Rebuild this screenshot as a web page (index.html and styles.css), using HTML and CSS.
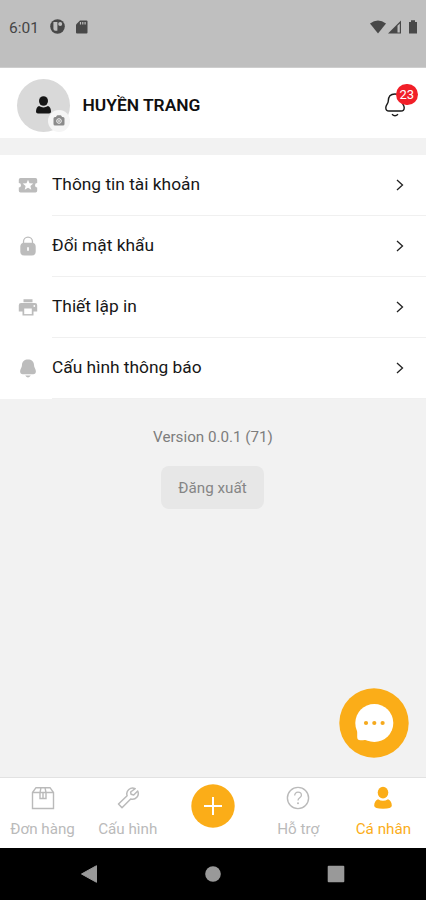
FILE: index.html
```html
<!DOCTYPE html>
<html lang="vi">
<head>
<meta charset="utf-8">
<title>Cá nhân</title>
<link rel="stylesheet" href="styles.css">
</head>
<body>
<div class="screen">
  <div class="status">
    <span class="time">6:01</span>
    <svg class="status-app" width="15" height="15" viewBox="0 0 15 15"><circle cx="7.5" cy="7.5" r="7.3" fill="#484848"/><path d="M3.400 3h4v8.800h-2a2 2 0 0 1-2-2z" fill="#bfbfbf"/><circle cx="10.200" cy="4.900" r="2" fill="#bfbfbf"/></svg>
    <svg class="status-sd" width="12" height="14" viewBox="0 0 12 14"><path d="M4 .5h6.500Q11.500.5 11.500 1.500v11q0 1-1 1h-9.500q-1 0-1-1V4.500z" fill="#484848"/><path d="M4.500 2v2.500M6.800 2v2.500M9.100 2v2.500" stroke="#bfbfbf" stroke-width="1.200"/></svg>
    <svg class="status-system" width="48" height="15" viewBox="0 0 48 15"><path d="M0 3.500Q8-2.500 16 3.500L8 13.500z" fill="#484848"/><path d="M18 13.500L31 .5v13z" fill="#484848"/><path d="M27.500 5.700l2.300-2.300v9.200h-2.300z" fill="#bfbfbf"/><path d="M39 2h2V.300h4V2h2v11.500h-8z" fill="#484848"/></svg>
  </div>
  <header class="profile">
    <div class="avatar">
      <svg width="16" height="20" viewBox="0 0 16 20"><ellipse cx="7.500" cy="6" rx="4.500" ry="4.800" fill="#151515"/><path d="M3 11Q7.500 13.800 12 11Q15 12.300 15 16.800Q15 18.500 13 18.500h-11Q0 18.500 0 16.800Q0 12.300 3 11z" fill="#151515"/></svg>
      <span class="camera"><svg width="12" height="11" viewBox="0 0 12 11"><path d="M3.500 1Q4 .300 4.500.300h3Q8 .300 8.500 1L9 2h1q1.500 0 1.500 1.500v5.500q0 1.500-1.500 1.500h-8Q.5 10.500.5 9v-5.500Q.5 2 2 2h1z" fill="#8b8b8b"/><circle cx="6" cy="6" r="2.300" fill="none" stroke="#f5f5f5"/><path d="M6 4.900v2.200M4.900 6h2.200" stroke="#f5f5f5" stroke-width=".7"/></svg></span>
    </div>
    <h1 class="name">HUYỀN TRANG</h1>
    <div class="bell">
      <svg width="22" height="26" viewBox="0 0 22 26"><path d="M4.200 9.500C4.200 4.500 6.500 2 11 2s6.800 2.500 6.800 7.500c0 2 2.400 3.500 2.400 6.200 0 2.200-1.200 3.300-3.200 3.300H5c-2 0-3.200-1.100-3.200-3.300 0-2.700 2.400-4.200 2.400-6.200z" fill="none" stroke="#181818" stroke-width="1.400"/><path d="M8 22.200q3 3 6 0" fill="none" stroke="#181818" stroke-width="1.400"/></svg>
      <span class="badge">23</span>
    </div>
  </header>
  <main class="content">
    <ul class="menu">
      <li class="row"><svg class="row-icon" width="20" height="22" viewBox="0 0 20 22"><path d="M2.500 4h15q1.700 0 1.700 1.700V9a2.200 2.200 0 0 0 0 4.400v3.300q0 1.700-1.700 1.700h-15Q.8 18.400.8 16.700v-3.300a2.200 2.200 0 0 0 0-4.400V5.700Q.8 4 2.500 4z" fill="#bcbcbc"/><path d="M10 5.800l1.500 3.500 3.800.3-2.900 2.500.9 3.700-3.300-2-3.300 2 .9-3.700-2.900-2.500 3.800-.3z" fill="#fff"/></svg><span class="label">Thông tin tài khoản</span><svg class="chevron" width="8" height="12" viewBox="0 0 8 12"><path d="M1 1l5.500 5L1 11"/></svg></li>
      <li class="row"><svg class="row-icon" width="20" height="22" viewBox="0 0 20 22"><path d="M5.500 9V6.700a4.500 4.500 0 0 1 9 0V9" fill="none" stroke="#bcbcbc" stroke-width="1.300"/><rect x="2.300" y="7.700" width="15.400" height="12.800" rx="4" fill="#bcbcbc"/><path d="M10 12.200v3.500" stroke="#fff" stroke-width="1.700"/></svg><span class="label">Đổi mật khẩu</span><svg class="chevron" width="8" height="12" viewBox="0 0 8 12"><path d="M1 1l5.500 5L1 11"/></svg></li>
      <li class="row"><svg class="row-icon" width="20" height="22" viewBox="0 0 20 22"><path d="M5.500 3.200h9v3h-9zM3 7h14q2.200 0 2.200 2.200v6.200h-3.700v4.200h-11v-4.200H.8V9.200Q.8 7 3 7z" fill="#bcbcbc"/><path d="M6.200 12.500h7.600v5.600H6.200z" fill="#fff"/><circle cx="16.300" cy="10" r=".9" fill="#fff"/></svg><span class="label">Thiết lập in</span><svg class="chevron" width="8" height="12" viewBox="0 0 8 12"><path d="M1 1l5.500 5L1 11"/></svg></li>
      <li class="row"><svg class="row-icon" width="20" height="22" viewBox="0 0 20 22"><path d="M4 8c0-3.500 2.500-5.500 6-5.500s6 2 6 5.500c0 2.500 1.900 4 1.900 6.300 0 2-1 3-2.700 3H4.800c-1.700 0-2.700-1-2.700-3C2.100 12 4 10.500 4 8z" fill="#bcbcbc"/><path d="M7.200 18.500h5.600q-2.800 4-5.600 0z" fill="#bcbcbc"/></svg><span class="label">Cấu hình thông báo</span><svg class="chevron" width="8" height="12" viewBox="0 0 8 12"><path d="M1 1l5.500 5L1 11"/></svg></li>
    </ul>
    <p class="version">Version 0.0.1 (71)</p>
    <button class="logout">Đăng xuất</button>
    <button class="chat" aria-label="Chat"><svg width="70" height="70" viewBox="0 0 70 70"><circle cx="35" cy="35" r="34.700" fill="#fbad18"/><circle cx="35.300" cy="35" r="19" fill="#fff"/><path d="M18.200 40v9q0 3.200 3.200 3.200H24q3-.5 7 .8z" fill="#fff"/><g fill="#f5a91d"><circle cx="27" cy="35" r="2.100"/><circle cx="35.300" cy="35" r="2.100"/><circle cx="43.600" cy="35" r="2.100"/></g></svg></button>
  </main>
  <nav class="tabs">
    <a class="tab"><svg width="24" height="24" viewBox="0 0 24 24"><path d="M1.500 6.500L5 1.700h14l3.500 4.800v16h-21zM1.500 6.500h21M10 1.700L9 6.500v6h6v-6l-1-4.800M12 6.500v6" fill="none" stroke="currentColor" stroke-width="1.400"/></svg><span class="tab-label">Đơn hàng</span></a>
    <a class="tab"><svg width="24" height="24" viewBox="0 0 24 24"><path d="M19.200 2.700a5.800 5.800 0 0 0-8.100 7L2.500 18l3.500 3.700 8.700-8.700a5.800 5.800 0 0 0 7-8l-4 4-2.600-.7-.5-2.300z" fill="none" stroke="currentColor" stroke-width="1.500" stroke-linejoin="round"/></svg><span class="tab-label">Cấu hình</span></a>
    <a class="tab add"><svg width="44" height="44" viewBox="0 0 44 44"><circle cx="22" cy="22" r="21.700" fill="#fbad18"/><path d="M22 13v18M13 22h18" stroke="#fff" stroke-width="2"/></svg></a>
    <a class="tab"><svg width="24" height="24" viewBox="0 0 24 24"><circle cx="12" cy="12" r="10.600" fill="none" stroke="currentColor" stroke-width="1.400"/><path d="M8.700 9.600c0-2 1.300-3.400 3.300-3.400s3.400 1.300 3.400 3c0 2.600-3.400 2.600-3.400 5.300" fill="none" stroke="currentColor" stroke-width="1.300"/><circle cx="12" cy="17.300" r="1" fill="currentColor"/></svg><span class="tab-label">Hỗ trợ</span></a>
    <a class="tab active"><svg width="24" height="24" viewBox="0 0 24 24"><ellipse cx="12" cy="6.600" rx="5.300" ry="5.800" fill="currentColor"/><path d="M7 13.300q5 3 10 0 3.800 1.800 3.800 6.500 0 3-8.800 3t-8.800-3q0-4.700 3.800-6.500z" fill="currentColor"/></svg><span class="tab-label">Cá nhân</span></a>
  </nav>
  <div class="system-nav">
    <svg width="18" height="20" viewBox="0 0 18 20"><path d="M1.500 10L16.500 1.700v16.600z" fill="#999" stroke="#999" stroke-linejoin="round"/></svg>
    <svg width="16" height="16" viewBox="0 0 16 16"><circle cx="8" cy="8" r="7.800" fill="#999"/></svg>
    <svg width="18" height="18" viewBox="0 0 18 18"><rect x=".7" y=".7" width="16.600" height="16.600" rx="1" fill="#999"/></svg>
  </div>
</div>
</body>
</html>
```
FILE: styles.css
```css
* { box-sizing: border-box; }
body { margin: 0; font-family: Roboto, "Noto Sans", sans-serif; background: #f2f2f2; }
svg { display: block; flex: none; }
button { border: 0; padding: 0; font: inherit; }
.screen { width: 426px; height: 900px; display: flex; flex-direction: column; overflow: hidden; }
.status { height: 68px; flex: none; display: flex; align-items: flex-start; padding: 19px 8px 0 9px; background: #bfbfbf; border-bottom: 1px solid #cecece; }
.time { width: 41px; font-size: 15.500px; line-height: 18px; color: #454545; }
.status-sd { margin-left: 11px; margin-top: 1px; }
.status-system { margin-left: auto; margin-top: 1px; }
.profile { height: 70px; flex: none; display: flex; align-items: center; padding: 4px 18px 0 17px; background: #fff; }
.avatar { position: relative; width: 53px; height: 53px; border-radius: 50%; background: #d9d9d9; display: flex; align-items: center; justify-content: center; }
.camera { position: absolute; right: 0; bottom: 0; width: 22px; height: 22px; border-radius: 50%; background: #f5f5f5; display: flex; align-items: center; justify-content: center; }
.name { margin: -1px 0 0 12.500px; font-size: 17.400px; line-height: 22px; font-weight: 600; color: #101010; white-space: nowrap; }
.bell { position: relative; margin-left: auto; width: 24px; height: 26px; }
.badge { position: absolute; left: 12px; top: -8.500px; width: 21.500px; height: 21.500px; border-radius: 50%; background: #f11f28; color: #fff; font-size: 13px; line-height: 22px; text-align: center; }
.content { position: relative; flex: 1; padding-top: 17px; display: flex; flex-direction: column; align-items: center; }
.menu { width: 100%; margin: 0; padding: 0; list-style: none; background: #fff; }
.row { display: flex; height: 61px; padding-left: 18px; align-items: center; }
.label { flex: 1; height: 61px; margin-left: 14px; line-height: 58px; font-size: 17.350px; color: #171717; border-bottom: 1px solid #f0f0f0; white-space: nowrap; }
.chevron { margin: -1px 22px 0 -30px; fill: none; stroke: #222; stroke-width: 1.300; }
.row-icon { margin-top: -1px; }
.version { margin: 28px 0 19px; font-size: 15.200px; line-height: 20px; color: #7d7d7d; white-space: nowrap; }
.logout { width: 103px; height: 43px; margin-right: 1px; border-radius: 8px; background: #e7e7e7; color: #858585; font-size: 15.200px; }
.chat { position: absolute; right: 17px; bottom: 19px; background: transparent; }
.tabs { height: 71px; flex: none; display: grid; grid-template-columns: repeat(5, 1fr); background: #fff; border-top: 1px solid #e2e2e2; }
.tab { display: flex; flex-direction: column; align-items: center; padding-top: 8px; color: #bababa; }
.tab-label { margin-top: 9px; font-size: 15.200px; line-height: 20px; white-space: nowrap; }
.add { padding-top: 6px; }
.active { color: #fbad18; }
.system-nav { height: 52px; flex: none; background: #000; display: flex; align-items: center; justify-content: space-between; padding: 0 81px 0 80px; }
```
